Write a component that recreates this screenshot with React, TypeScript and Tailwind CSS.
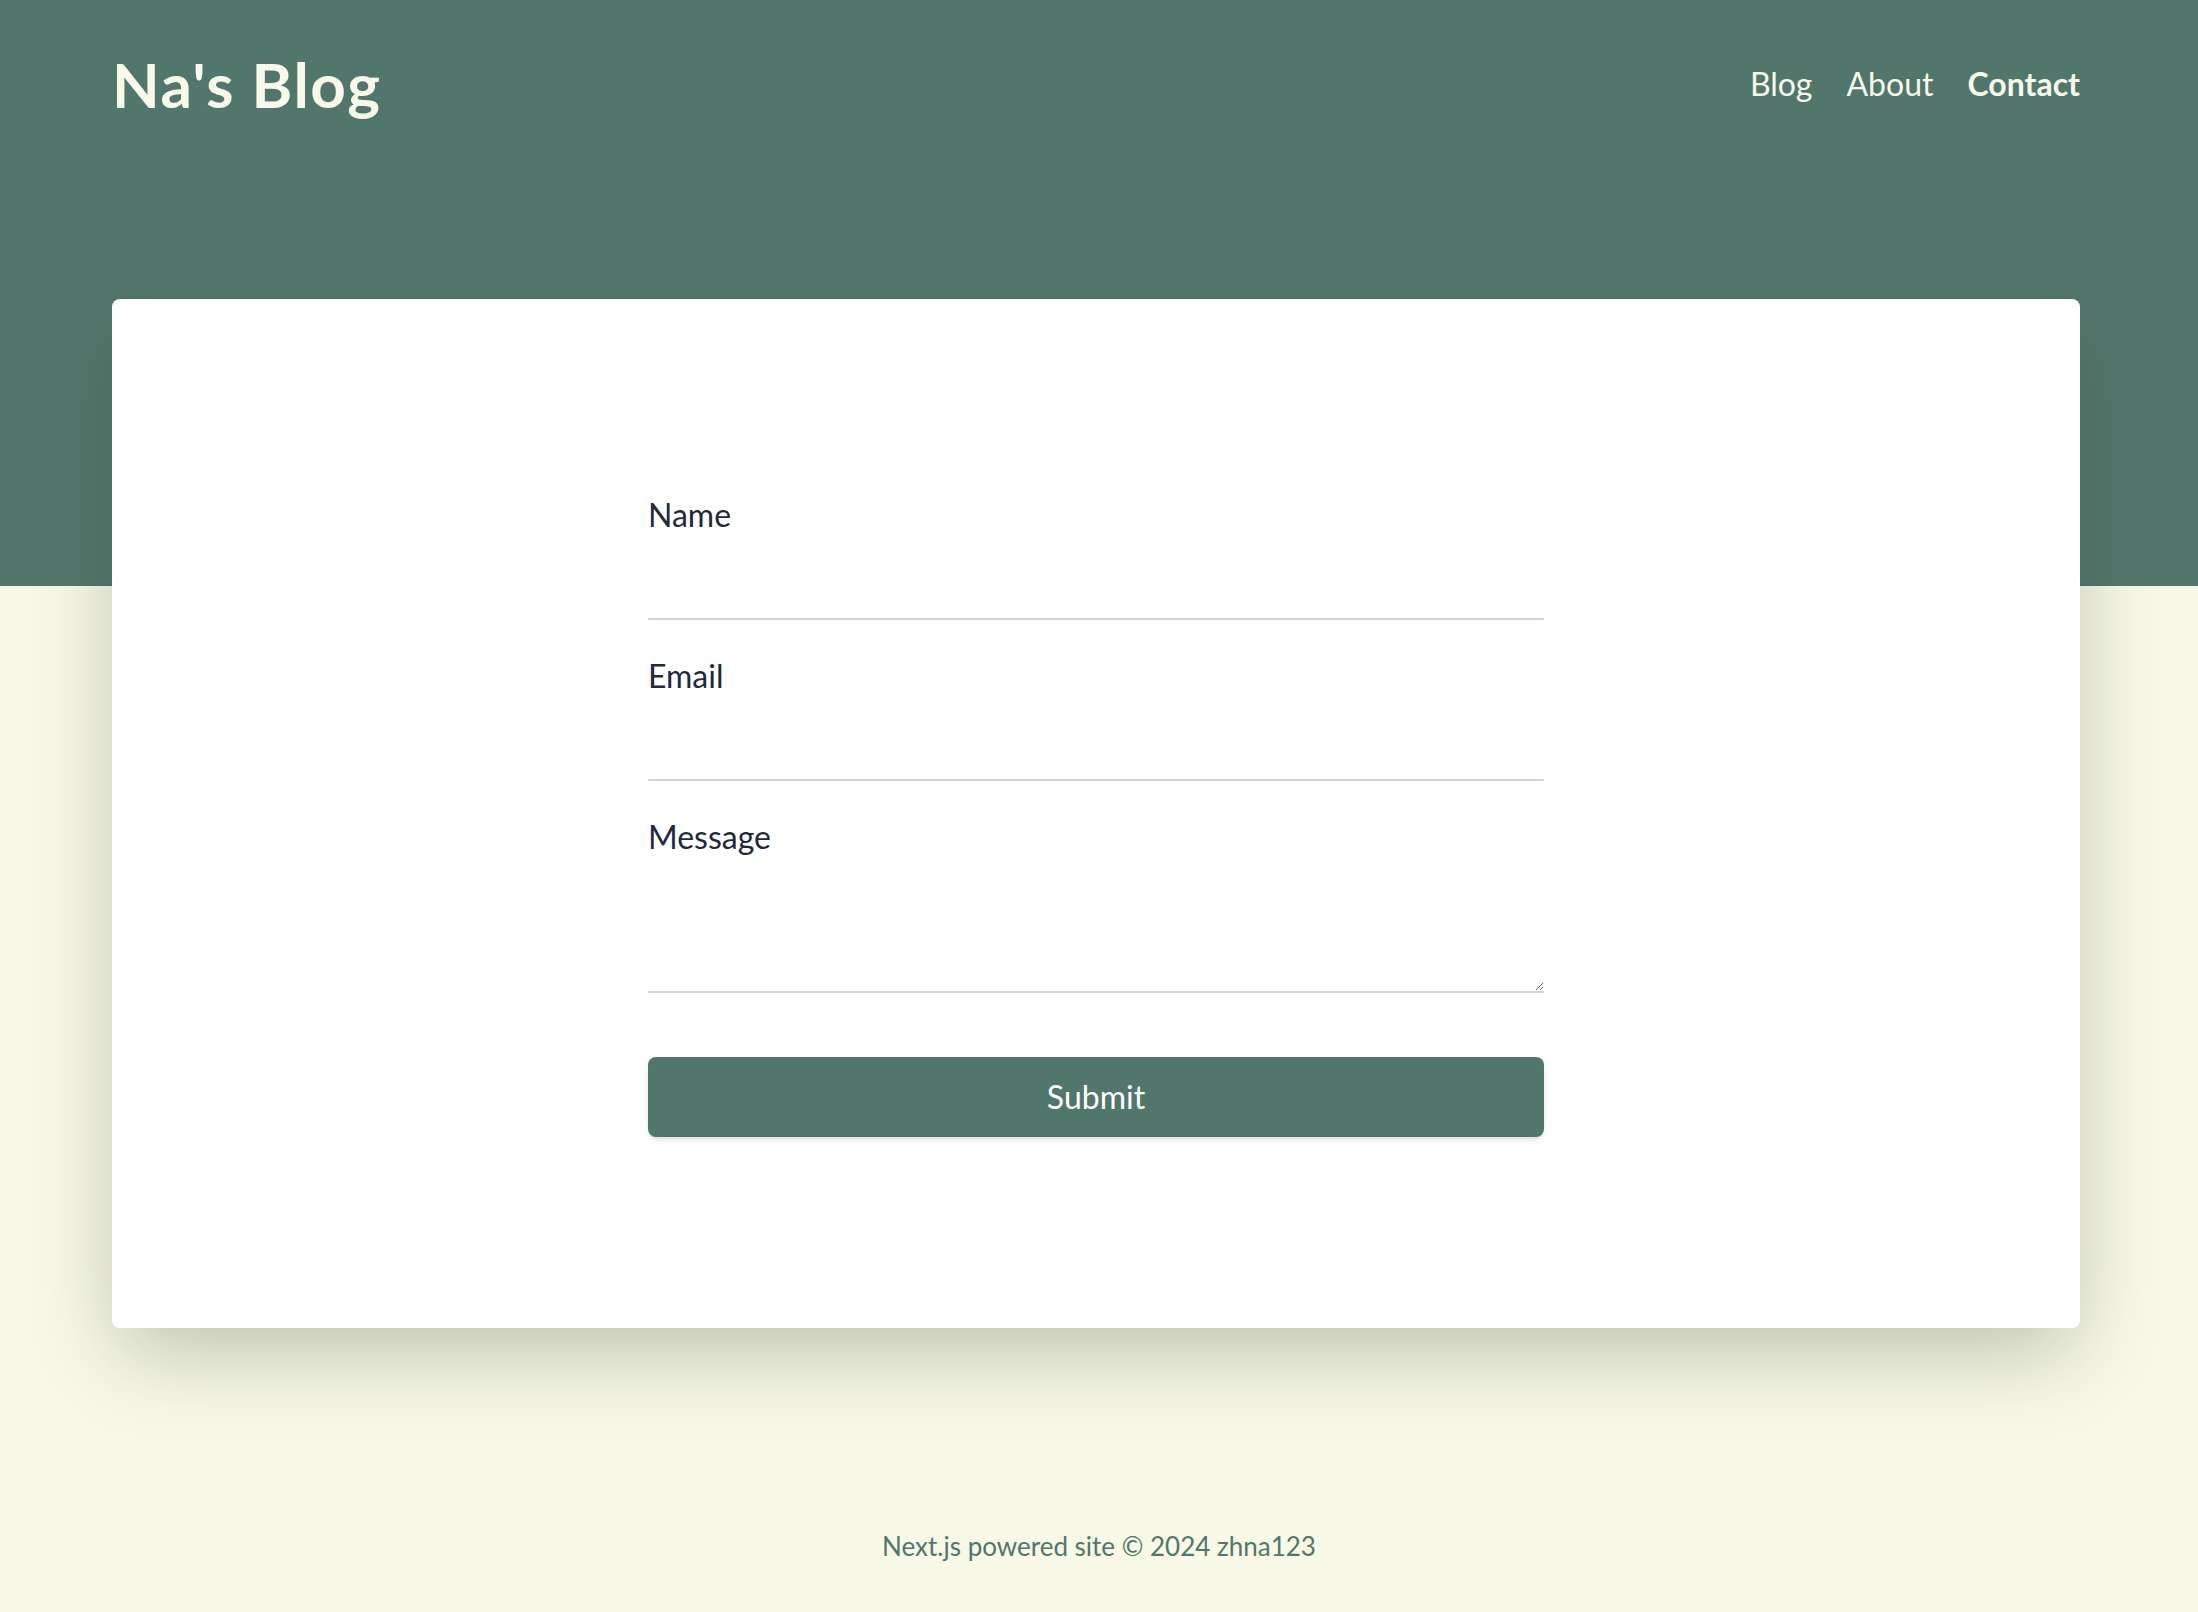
import React from "react";

const navLinks = [
  { label: "Blog", active: false },
  { label: "About", active: false },
  { label: "Contact", active: true },
];

const fieldClass = "w-full border-0 border-b-2 border-[#cbd5e1] bg-transparent text-[30px] text-slate-800 outline-none";

export default function App() {
  return (
    <div className="flex min-h-screen flex-col bg-[linear-gradient(to_bottom,#51766c_586px,#f7f8e6_586px)] font-['Lato','Liberation_Sans',sans-serif]">
      <header className="flex items-center justify-between pl-[112px] pr-[118px] pt-[47px]">
        <h1 className="text-[62px] font-bold leading-[74px] tracking-[1.5px] text-[#f8f9e9]">Na's Blog</h1>
        <nav className="flex items-center gap-[34px] text-[32px] text-[#f8f9e9]">
          {navLinks.map((link) => (
            <a key={link.label} href="#" className={link.active ? "font-bold" : "font-normal"}>{link.label}</a>
          ))}
        </nav>
      </header>

      <main className="pl-[112px] pr-[118px] pt-[178px]">
        <div className="rounded-lg bg-white pt-[189px] pb-[191px] shadow-[0_30px_80px_-10px_rgba(60,70,40,0.32)]">
          <form className="mx-auto flex w-[896px] flex-col gap-[29px]" onSubmit={(e) => e.preventDefault()}>
            <label className="flex flex-col gap-[9px]">
              <span className="pt-[3px] text-[32px] leading-[48px] text-slate-800">Name</span>
              <input type="text" name="name" className={fieldClass + " h-[72px]"} />
            </label>
            <label className="flex flex-col gap-[9px]">
              <span className="pt-[3px] text-[32px] leading-[48px] text-slate-800">Email</span>
              <input type="email" name="email" className={fieldClass + " h-[72px]"} />
            </label>
            <label className="flex flex-col gap-[9px]">
              <span className="pt-[3px] text-[32px] leading-[48px] text-slate-800">Message</span>
              <textarea name="message" className={fieldClass + " block h-[123px]"} />
            </label>
            <button type="submit" className="mt-[35px] h-[80px] rounded-lg bg-[#51766c] text-[32px] text-white shadow-md">
              Submit
            </button>
          </form>
        </div>
      </main>

      <footer className="mt-auto pb-[46px] text-center text-[26px] text-[#51766c]">
        Next.js powered site © 2024 zhna123
      </footer>
    </div>
  );
}
